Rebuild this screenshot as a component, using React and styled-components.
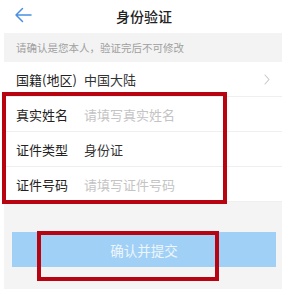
import styled, { createGlobalStyle } from 'styled-components';

const GlobalStyle = createGlobalStyle`
    html, body {
        margin: 0;
        padding: 0;
        background: #fff;
    }
    body {
        font-family: "Noto Sans CJK SC", "Noto Sans", sans-serif;
        color: #333;
    }
`;

const fields = [
    { label: '真实姓名', placeholder: '请填写真实姓名' },
    { label: '证件类型', value: '身份证' },
    { label: '证件号码', placeholder: '请填写证件号码' },
];

const App = () => {
    return (
        <Page>
            <GlobalStyle />
            <Header>
                <Back>
                    <svg width="18" height="16" viewBox="0 0 18 16" fill="none">
                        <path d="M17 8H2M8.5 1.5L2 8l6.5 6.5" stroke="#4a90e2" strokeWidth="1.5" strokeLinecap="round" strokeLinejoin="round" />
                    </svg>
                </Back>
                <Title>身份验证</Title>
            </Header>
            <Notice>请确认是您本人，验证完后不可修改</Notice>
            <List>
                <Row>
                    <Label>国籍(地区)</Label>
                    <Value>中国大陆</Value>
                    <Chevron>
                        <svg width="6" height="11" viewBox="0 0 6 11" fill="none">
                            <path d="M1 1l4 4.5L1 10" stroke="#c8c8c8" strokeWidth="1.1" strokeLinecap="round" strokeLinejoin="round" />
                        </svg>
                    </Chevron>
                </Row>
                <Marked>
                    {fields.map((f) => (
                        <Row key={f.label}>
                            <Label>{f.label}</Label>
                            <Value $empty={!f.value}>{f.value || f.placeholder}</Value>
                        </Row>
                    ))}
                </Marked>
            </List>
            <Footer>
                <SubmitWrap>
                    <Submit>确认并提交</Submit>
                </SubmitWrap>
            </Footer>
        </Page>
    );
}

const Page = styled.div`
    width: 286px;
    height: 289px;
    overflow: hidden;
    background: #fff;
    display: flex;
    flex-direction: column;
`;

const Header = styled.div`
    height: 31px;
    display: flex;
    align-items: center;
    justify-content: center;
    position: relative;
`;

const Back = styled.div`
    position: absolute;
    left: 14px;
    top: 7px;
    display: flex;
`;

const Title = styled.div`
    font-size: 14px;
    font-weight: 500;
    color: #222;
    margin-left: 2px;
`;

const Notice = styled.div`
    margin: 2px 4px 0;
    height: 29px;
    background: #f3f3f3;
    font-size: 10.5px;
    color: #a0a0a0;
    padding-left: 12px;
    display: flex;
    align-items: center;
`;

const List = styled.div`
    margin: 0 4px;
`;

const Marked = styled.div`
    position: relative;
    &::after {
        content: '';
        position: absolute;
        left: -2px;
        top: -5px;
        width: 225px;
        height: 112px;
        box-sizing: border-box;
        border: 4px solid #b70410;
        pointer-events: none;
    }
`;

const Row = styled.div`
    height: 35px;
    box-sizing: border-box;
    border-bottom: 1px solid #efefef;
    display: flex;
    align-items: center;
    padding-left: 12px;
    padding-right: 10px;
    font-size: 13px;
`;

const Label = styled.div`
    width: 68px;
    color: #222;
    white-space: nowrap;
`;

const Value = styled.div`
    flex: 1;
    color: ${props => props.$empty ? '#c4c4c4' : '#333'};
`;

const Chevron = styled.div`
    display: flex;
    margin-right: 2px;
`;

const Footer = styled.div`
    flex: 1;
    margin: 0 4px;
    background: #f4f4f4;
    padding: 30px 6px 0 8px;
`;

const SubmitWrap = styled.div`
    position: relative;
    &::after {
        content: '';
        position: absolute;
        left: 25px;
        top: -1px;
        width: 182px;
        height: 50px;
        box-sizing: border-box;
        border: 4px solid #b70410;
        pointer-events: none;
    }
`;

const Submit = styled.div`
    height: 35px;
    background: #a0d0f6;
    color: #eef6fd;
    font-size: 13.5px;
    display: flex;
    align-items: center;
    justify-content: center;
`;

export default App;
